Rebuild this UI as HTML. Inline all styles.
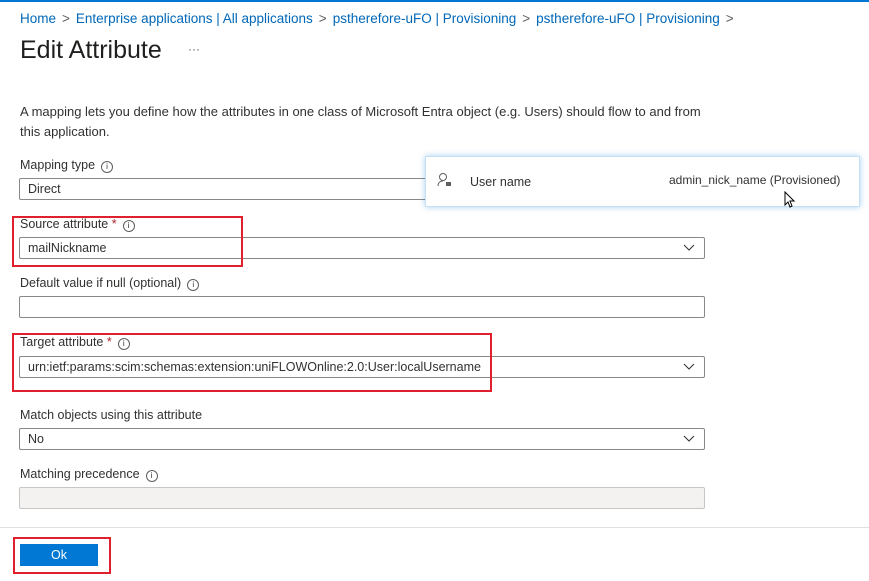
<!DOCTYPE html>
<html><head><style>
body{margin:0;width:869px;height:581px;background:#fff;font-family:"Liberation Sans",sans-serif;color:#323130;position:relative;overflow:hidden}
.a{position:absolute}
.bc{top:11px;left:20px;font-size:13.5px;color:#0067b8;white-space:nowrap}
.bc span{color:#605e5c;margin:0 6px}
.lbl{font-size:12.5px;color:#323130}
.inp{position:absolute;left:19px;height:22px;border:1px solid #8a8886;border-radius:2px;background:#fff;font-size:12.5px;line-height:20px;padding-left:8px;box-sizing:border-box;width:686px}
.chev{position:absolute;right:9px;top:6px}
.i{display:inline-block;width:10px;height:10px;border:1px solid #605e5c;border-radius:50%;font-size:8px;line-height:10px;text-align:center;margin-left:6px;vertical-align:0px}
.red{position:absolute;border:2px solid #e0202c}
</style></head><body>
<div class="a" style="top:0;left:0;width:869px;height:2px;background:#0078d4"></div>
<div class="a bc">Home<span>&gt;</span>Enterprise applications | All applications<span>&gt;</span>pstherefore-uFO | Provisioning<span>&gt;</span>pstherefore-uFO | Provisioning<span>&gt;</span></div>
<div class="a" style="top:36px;left:20px;font-size:25px;color:#201f1e">Edit Attribute</div>
<div class="a" style="top:42px;left:188px;font-size:12px;color:#605e5c">···</div>
<div class="a" style="top:102px;left:20px;font-size:13px;line-height:20px;width:700px">A mapping lets you define how the attributes in one class of Microsoft Entra object (e.g. Users) should flow to and from this application.</div>

<div class="a lbl" style="top:158px;left:20px">Mapping type<span class="i">i</span></div>
<div class="inp" style="top:178px">Direct</div>

<div class="a lbl" style="top:217px;left:20px">Source attribute <span style="color:#a4262c">*</span><span class="i">i</span></div>
<div class="inp" style="top:237px">mailNickname<svg class="chev" width="12" height="8"><path d="M1 1l5 5 5-5" stroke="#323130" fill="none"/></svg></div>
<div class="red" style="left:12px;top:216px;width:227px;height:47px"></div>

<div class="a lbl" style="top:276px;left:20px">Default value if null (optional)<span class="i">i</span></div>
<div class="inp" style="top:296px"></div>

<div class="a lbl" style="top:335px;left:20px">Target attribute <span style="color:#a4262c">*</span><span class="i">i</span></div>
<div class="inp" style="top:356px">urn:ietf:params:scim:schemas:extension:uniFLOWOnline:2.0:User:localUsername<svg class="chev" width="12" height="8"><path d="M1 1l5 5 5-5" stroke="#323130" fill="none"/></svg></div>
<div class="red" style="left:12px;top:333px;width:476px;height:55px"></div>

<div class="a lbl" style="top:408px;left:20px">Match objects using this attribute</div>
<div class="inp" style="top:428px">No<svg class="chev" width="12" height="8"><path d="M1 1l5 5 5-5" stroke="#323130" fill="none"/></svg></div>

<div class="a lbl" style="top:467px;left:20px">Matching precedence<span class="i">i</span></div>
<div class="inp" style="top:487px;background:#f3f2f1;border-color:#c8c6c4"></div>

<div class="a" style="top:527px;left:0;width:869px;height:1px;background:#e1dfdd"></div>
<div class="a" style="top:544px;left:20px;width:78px;height:22px;background:#0078d4;color:#fff;font-size:12.5px;line-height:22px;text-align:center">Ok</div>
<div class="red" style="left:13px;top:537px;width:94px;height:33px"></div>

<div class="a" style="left:425px;top:156px;width:433px;height:49px;background:#fff;border:1px solid #c7e0f4;box-shadow:0 0 6px rgba(0,120,212,.35)">
<svg class="a" style="left:11px;top:15px" width="16" height="16"><circle cx="6" cy="5" r="3.5" stroke="#605e5c" fill="none"/><path d="M1 14c0-4 3-5 5-5" stroke="#605e5c" fill="none"/><rect x="9" y="10" width="5" height="4" fill="#605e5c"/></svg>
<div class="a lbl" style="left:44px;top:18px">User name</div>
<div class="a lbl" style="left:243px;top:16px;font-size:12px">admin_nick_name (Provisioned)</div>
<svg class="a" style="left:358px;top:34px" width="12" height="18"><path d="M1 1v13l3-3 2 5 2-1-2-5h4z" fill="#fff" stroke="#000"/></svg>
</div>
</body></html>
